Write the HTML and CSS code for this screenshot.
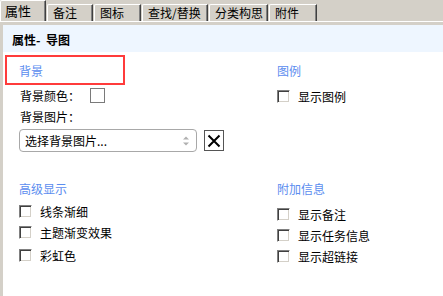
FILE: index.html
```html
<!DOCTYPE html>
<html lang="zh">
<head>
    <meta charset="UTF-8">
    <title>属性</title>
    <link rel="stylesheet" href="styles.css">
</head>
<body>
<nav class="tabs">
    <a class="tab active w1">属性</a>
    <a class="tab w2">备注</a>
    <a class="tab w3">图标</a>
    <a class="tab w4">查找/替换</a>
    <a class="tab w5">分类构思</a>
    <a class="tab w6">附件</a>
</nav>
<div class="panel">
    <div class="panel-head">属性-&nbsp; 导图</div>
    <div class="content">
        <section class="sec left top">
            <div class="title marked">背景</div>
            <div class="row first">背景颜色：<span class="color-box"></span></div>
            <div class="row pic">背景图片：</div>
            <div class="pick">
                <div class="select">
                    <span>选择背景图片...</span>
                    <svg class="spin" width="8" height="12" viewBox="0 0 8 12">
                        <path d="M1 4.5 L4 1.5 L7 4.5 Z" fill="#b0b0b0"/>
                        <path d="M1 7.5 L4 10.5 L7 7.5 Z" fill="#b0b0b0"/>
                    </svg>
                </div>
                <div class="clear">
                    <svg width="14" height="14" viewBox="0 0 14 14">
                        <path d="M1.5 1.5 L12.5 12.5 M12.5 1.5 L1.5 12.5" stroke="#000" stroke-width="2"/>
                    </svg>
                </div>
            </div>
        </section>
        <section class="sec right top">
            <div class="title">图例</div>
            <div class="row check first"><span class="cb"></span>显示图例</div>
        </section>
        <section class="sec left bottom">
            <div class="title">高级显示</div>
            <div class="row check first"><span class="cb"></span>线条渐细</div>
            <div class="row check"><span class="cb"></span>主题渐变效果</div>
            <div class="row check last"><span class="cb"></span>彩虹色</div>
        </section>
        <section class="sec right bottom">
            <div class="title">附加信息</div>
            <div class="row check first"><span class="cb"></span>显示备注</div>
            <div class="row check"><span class="cb"></span>显示任务信息</div>
            <div class="row check"><span class="cb"></span>显示超链接</div>
        </section>
    </div>
</div>
</body>
</html>
```

FILE: styles.css
```css
body {
    margin: 0;
    background: #d4d0c8;
    font-family: "Noto Sans CJK SC", "Microsoft YaHei", sans-serif;
    font-size: 12px;
    color: #000;
    height: 296px;
    overflow: hidden;
}
.tabs {
    display: flex;
    align-items: flex-end;
    height: 21px;
    border-bottom: 1px solid #fff;
}
.tab {
    box-sizing: border-box;
    height: 17px;
    margin-right: 1px;
    padding-left: 5px;
    line-height: 15px;
    font-size: 12px;
    border-top: 1px solid #fff;
    border-left: 1px solid #fff;
    border-right: 1px solid #404040;
    box-shadow: inset -1px 0 #808080;
    border-top-left-radius: 2px;
}
.tab.active {
    height: 21px;
    padding-left: 4px;
    line-height: 20px;
    font-size: 13px;
}
.w1 { width: 46px; }
.w2 { width: 46px; }
.w3 { width: 47px; }
.w4 { width: 66px; }
.w5 { width: 59px; }
.w6 { width: 48px; }
.panel {
    margin: 3px 0 0 3px;
    background: #fff;
    height: 271px;
}
.panel-head {
    height: 27px;
    line-height: 29px;
    padding-left: 9px;
    background: #eef6ff;
    font-weight: bold;
}
.content {
    display: grid;
    grid-template-columns: 273px 1fr;
}
.sec {
    padding-left: 16px;
}
.sec.right {
    padding-left: 1px;
}
.sec.top.left {
    padding-top: 3px;
}
.sec.top.right {
    padding-top: 10px;
}
.sec.bottom {
    padding-top: 28px;
}
.title {
    height: 18px;
    line-height: 18px;
    color: #5b8def;
}
.title.marked {
    box-sizing: border-box;
    width: 120px;
    height: 30px;
    line-height: 28px;
    margin-left: -14px;
    padding-left: 12px;
    border: 2px solid #ff3b3b;
}
.row {
    display: flex;
    align-items: center;
    height: 18px;
    margin-top: 3px;
}
.sec.top.left .row.first {
    margin-top: 1px;
    padding-left: 1px;
}
.row.pic {
    padding-left: 1px;
}
.sec.top.right .row.first {
    margin-top: 7px;
}
.sec.bottom.left .row.first {
    margin-top: 4px;
}
.sec.bottom.left .row.last {
    margin-top: 5px;
}
.sec.bottom.right .row.first {
    margin-top: 7px;
}
.color-box {
    box-sizing: border-box;
    width: 15px;
    height: 15px;
    margin-left: 10px;
    border: 1px solid #7a7a7a;
    background: #fff;
}
.cb {
    box-sizing: border-box;
    width: 13px;
    height: 13px;
    margin-right: 8px;
    background: #fff;
    border: 1px solid;
    border-color: #808080 #fff #fff #808080;
    box-shadow: inset 1px 1px #404040, inset -1px -1px #d4d0c8;
}
.pick {
    display: flex;
    align-items: center;
    margin-top: 4px;
}
.select {
    box-sizing: border-box;
    display: flex;
    align-items: center;
    justify-content: space-between;
    width: 178px;
    height: 23px;
    padding: 0 6px 0 5px;
    border: 1px solid #a8a8a8;
    border-radius: 4px;
    background: #fff;
}
.clear {
    box-sizing: border-box;
    display: flex;
    align-items: center;
    justify-content: center;
    width: 20px;
    height: 21px;
    margin-left: 7px;
    border: 1px solid #555;
    background: #fff;
}
```
